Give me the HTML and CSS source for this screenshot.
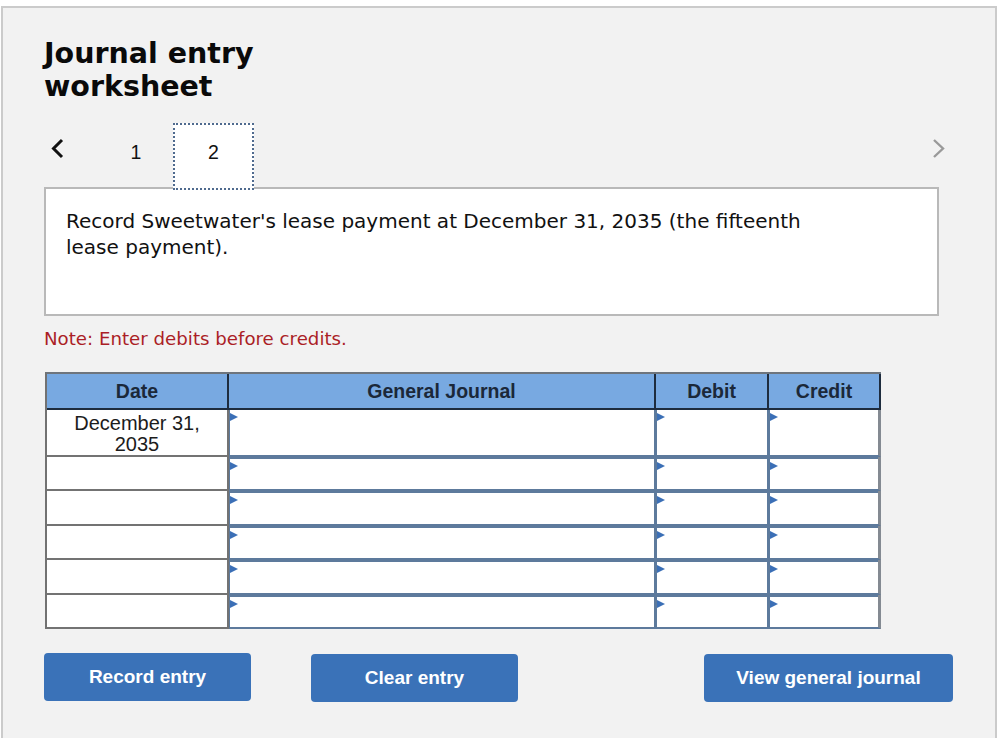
FILE: index.html
```html
<!DOCTYPE html>
<html lang="en">
<head>
<meta charset="utf-8">
<title>Journal entry worksheet</title>
<link rel="stylesheet" href="styles.css">
</head>
<body>
<div class="panel">
  <h1 class="title">Journal entry<br>worksheet</h1>

  <div class="tabs">
    <button class="nav prev" aria-label="Previous">
      <svg width="14" height="21" viewBox="0 0 14 21"><polyline points="12,2 3.5,10.5 12,19" fill="none" stroke="#111" stroke-width="3"/></svg>
    </button>
    <div class="tab">1</div>
    <div class="tab active">2</div>
    <div class="spacer"></div>
    <button class="nav next" aria-label="Next">
      <svg width="14" height="21" viewBox="0 0 14 21"><polyline points="2,2 11,10.5 2,19" fill="none" stroke="#9a9a9a" stroke-width="2.4"/></svg>
    </button>
  </div>

  <div class="question">
    <p>Record Sweetwater's lease payment at December 31, 2035 (the fifteenth lease payment).</p>
  </div>

  <p class="note">Note: Enter debits before credits.</p>

  <table class="journal">
    <colgroup>
      <col class="c-date"><col class="c-gj"><col class="c-dr"><col class="c-cr">
    </colgroup>
    <thead>
      <tr><th>Date</th><th>General Journal</th><th>Debit</th><th>Credit</th></tr>
    </thead>
    <tbody>
      <tr class="first">
        <td class="date">December 31,<br>2035</td>
        <td class="in"><div class="inp"></div></td>
        <td class="in"><div class="inp"></div></td>
        <td class="in last"><div class="inp"></div></td>
      </tr>
      <tr>
        <td class="date"></td>
        <td class="in"><div class="inp"></div></td>
        <td class="in"><div class="inp"></div></td>
        <td class="in last"><div class="inp"></div></td>
      </tr>
      <tr>
        <td class="date"></td>
        <td class="in"><div class="inp"></div></td>
        <td class="in"><div class="inp"></div></td>
        <td class="in last"><div class="inp"></div></td>
      </tr>
      <tr>
        <td class="date"></td>
        <td class="in"><div class="inp"></div></td>
        <td class="in"><div class="inp"></div></td>
        <td class="in last"><div class="inp"></div></td>
      </tr>
      <tr>
        <td class="date"></td>
        <td class="in"><div class="inp"></div></td>
        <td class="in"><div class="inp"></div></td>
        <td class="in last"><div class="inp"></div></td>
      </tr>
      <tr>
        <td class="date"></td>
        <td class="in"><div class="inp"></div></td>
        <td class="in"><div class="inp"></div></td>
        <td class="in last"><div class="inp"></div></td>
      </tr>
    </tbody>
  </table>

  <div class="actions">
    <button class="btn btn-record">Record entry</button>
    <button class="btn btn-clear">Clear entry</button>
    <button class="btn btn-view">View general journal</button>
  </div>
</div>
</body>
</html>
```

FILE: styles.css
```css
* { box-sizing: border-box; }

html, body {
  margin: 0;
  padding: 0;
  background: #ffffff;
}

.panel {
  margin: 6px 0 0 1px;
  width: 996px;
  height: 740px;
  background: #f2f2f2;
  border: 2px solid #cbcbcb;
  border-bottom: none;
  padding: 29px 42px 0 41px;
  font-family: "DejaVu Sans", Verdana, sans-serif;
}

.title {
  margin: 0;
  font-family: "DejaVu Sans", Verdana, sans-serif;
  font-weight: bold;
  font-size: 28.5px;
  line-height: 33px;
  color: #0a0a0a;
}

.tabs {
  display: flex;
  align-items: flex-start;
  margin-top: 20px;
  height: 67px;
  margin-bottom: -3px;
  position: relative;
  z-index: 1;
}

.nav {
  background: none;
  border: none;
  padding: 0;
  margin: 15px 0 0 0;
  width: 14px;
  height: 21px;
  display: block;
}
.nav svg { display: block; }
.prev { margin-left: 6px; margin-right: 32px; }
.next { margin-right: 7px; }

.spacer { flex: 1; }

.tab {
  width: 80px;
  height: 67px;
  border: 2px solid transparent;
  padding-top: 17px;
  text-align: center;
  font-family: "Liberation Sans", Arial, sans-serif;
  font-size: 19.5px;
  line-height: 20px;
  color: #111;
}
.tab.active {
  width: 81px;
  margin-left: -3px;
  background: #ffffff;
  border: 2px dotted #4f6a8e;
}

.question {
  width: 895px;
  height: 129px;
  background: #ffffff;
  border: 2px solid #b9b9b9;
  padding: 19px 20px 0 20px;
}
.question p {
  margin: 0;
  max-width: 770px;
  font-size: 20px;
  line-height: 26px;
  color: #111;
}

.note {
  margin: 12px 0 0 0;
  font-size: 18.2px;
  line-height: 22px;
  color: #ab1e26;
}

.journal {
  margin-top: 22px;
  margin-left: 1px;
  border-collapse: separate;
  border-spacing: 0;
  table-layout: fixed;
  width: 834px;
  border-top: 2px solid #6e757d;
  border-left: 2px solid #727272;
  font-family: "Liberation Sans", Arial, sans-serif;
}
.c-date { width: 182px; }
.c-gj { width: 427px; }
.c-dr { width: 113px; }
.c-cr { width: 112px; }

.journal th {
  height: 36px;
  padding: 0;
  background: #78a9e1;
  border-right: 2px solid #1e2c3e;
  border-bottom: 2px solid #1e2c3e;
  font-size: 19.5px;
  font-weight: bold;
  color: #1b2839;
  text-align: center;
  vertical-align: middle;
}

.journal td {
  padding: 0;
  height: 34.4px;
  background: #ffffff;
}
.journal tr.first td { height: 47px; }

.journal td.date {
  border-right: 2px solid #737373;
  border-bottom: 2px solid #737373;
  text-align: center;
  vertical-align: top;
  padding-top: 3px;
  font-size: 20px;
  line-height: 21px;
  color: #1c1c1c;
}

.journal td.in {
  border-right: 2px solid #5d7a9c;
  border-bottom: 2px solid #5d7a9c;
  vertical-align: top;
}
.journal td.in.last { border-right: 3px solid #848a92; }

.inp {
  position: relative;
  height: 100%;
  border-top: 2px solid #5d7a9c;
  border-left: 1px solid #5d7a9c;
}
.journal tr.first .inp { border-top: none; }

.inp::before {
  content: "";
  position: absolute;
  left: 0;
  top: 3px;
  width: 0;
  height: 0;
  border-left: 8px solid #3b6fb6;
  border-top: 4.5px solid transparent;
  border-bottom: 4.5px solid transparent;
}

.actions {
  display: flex;
  align-items: flex-start;
  margin-top: 24px;
}

.btn {
  height: 48px;
  border: none;
  border-radius: 4px;
  background: #3a72b8;
  color: #ffffff;
  font-family: "Liberation Sans", Arial, sans-serif;
  font-weight: bold;
  font-size: 19px;
  padding: 0;
}
.btn-record { width: 207px; }
.btn-clear { width: 207px; margin-left: 60px; margin-top: 1px; }
.btn-view { width: 249px; margin-left: auto; margin-top: 1px; }
```
